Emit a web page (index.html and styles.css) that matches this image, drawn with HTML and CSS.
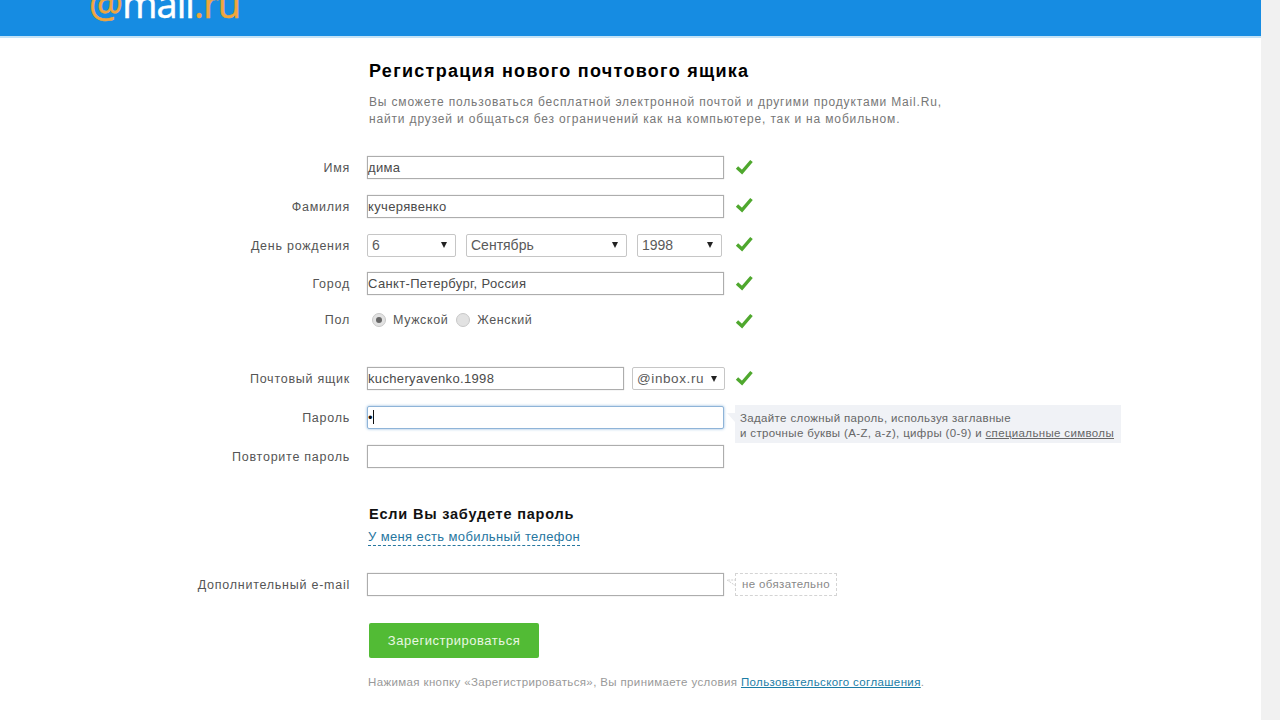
FILE: index.html
```html
<!DOCTYPE html>
<html lang="ru">
<head>
<meta charset="utf-8">
<title>Регистрация нового почтового ящика</title>
<link rel="stylesheet" href="styles.css">
</head>
<body>
<div class="page">
  <main class="main">
    <header class="topbar">
      <div class="logo"><span class="logo-o">@</span><span class="logo-w">mail</span><span class="logo-o">.ru</span></div>
    </header>
    <section class="intro">
      <h1 class="title">Регистрация нового почтового ящика</h1>
      <p class="lead">Вы сможете пользоваться бесплатной электронной почтой и другими продуктами Mail.Ru,<br>найти друзей и общаться без ограничений как на компьютере, так и на мобильном.</p>
    </section>
    <form class="form">
      <div class="row">
        <div class="label">Имя</div>
        <div class="field wide">дима</div>
        <svg class="check" viewBox="0 0 18 16"><path d="M2 8.5 L7 13 L16.5 2"/></svg>
      </div>
      <div class="row">
        <div class="label">Фамилия</div>
        <div class="field wide">кучерявенко</div>
        <svg class="check" viewBox="0 0 18 16"><path d="M2 8.5 L7 13 L16.5 2"/></svg>
      </div>
      <div class="row">
        <div class="label">День рождения</div>
        <div class="selects">
          <div class="select s-day"><span>6</span><i class="tri"></i></div>
          <div class="select s-month"><span>Сентябрь</span><i class="tri"></i></div>
          <div class="select s-year"><span>1998</span><i class="tri"></i></div>
        </div>
        <svg class="check" viewBox="0 0 18 16"><path d="M2 8.5 L7 13 L16.5 2"/></svg>
      </div>
      <div class="row">
        <div class="label">Город</div>
        <div class="field wide">Санкт-Петербург, Россия</div>
        <svg class="check" viewBox="0 0 18 16"><path d="M2 8.5 L7 13 L16.5 2"/></svg>
      </div>
      <div class="row row-gap">
        <div class="label label-up">Пол</div>
        <div class="radios">
          <i class="radio on"></i><span class="radio-text">Мужской</span>
          <i class="radio"></i><span class="radio-text">Женский</span>
        </div>
        <svg class="check check-up" viewBox="0 0 18 16"><path d="M2 8.5 L7 13 L16.5 2"/></svg>
      </div>
      <div class="row">
        <div class="label">Почтовый ящик</div>
        <div class="mailbox">
          <div class="field mail-name">kucheryavenko.1998</div>
          <div class="select s-domain"><span>@inbox.ru</span><i class="tri"></i></div>
        </div>
        <svg class="check" viewBox="0 0 18 16"><path d="M2 8.5 L7 13 L16.5 2"/></svg>
      </div>
      <div class="row">
        <div class="label">Пароль</div>
        <div class="field wide focus"><span class="dot">•</span><span class="caret"></span></div>
        <div class="tip">
          <i class="tip-arrow"></i>
          Задайте сложный пароль, используя заглавные<br>и строчные буквы (A-Z, a-z), цифры (0-9) и <a class="tip-link">специальные символы</a>
        </div>
      </div>
      <div class="row">
        <div class="label">Повторите пароль</div>
        <div class="field wide"></div>
      </div>
    </form>
    <section class="recover">
      <h2 class="subtitle">Если Вы забудете пароль</h2>
      <a class="phone-link">У меня есть мобильный телефон</a>
    </section>
    <div class="row extra">
      <div class="label">Дополнительный e-mail</div>
      <div class="field wide"></div>
      <div class="optional">
        <svg class="opt-arrow" viewBox="0 0 11 10"><path d="M11 7 L2 1 L11 1"/></svg>
        не обязательно
      </div>
    </div>
    <section class="actions">
      <button class="submit" type="button">Зарегистрироваться</button>
      <p class="terms">Нажимая кнопку «Зарегистрироваться», Вы принимаете условия <a class="terms-link">Пользовательского соглашения</a>.</p>
    </section>
  </main>
  <div class="scrollbar"></div>
</div>
</body>
</html>
```

FILE: styles.css
```css
* { box-sizing: border-box; }
html, body { margin: 0; height: 100%; overflow: hidden; }
body { background: #fff; font-family: "Liberation Sans", Arial, sans-serif; font-size: 13px; color: #555; }
.page { display: flex; height: 720px; overflow: hidden; }
.main { width: 1261px; flex: none; }
.scrollbar { flex: 1; background: #f1f1f1; }

.topbar { height: 38px; background: #168ce2; border-bottom: 2px solid #c4e3f7; overflow: hidden; padding-left: 89px; }
.logo { margin-top: -17px; font-family: "Open Sans", sans-serif; font-weight: 400; font-size: 38px; line-height: 40px; letter-spacing: -0.9px; white-space: nowrap; -webkit-text-stroke: 0.5px; }
.logo-o { color: #f0a63c; }
.logo-w { color: #fff; }

.intro { padding: 22px 0 0 369px; height: 118px; }
.title { margin: 0; font-size: 18px; line-height: 22px; font-weight: bold; color: #000; letter-spacing: 1.28px; }
.lead { margin: 12px 0 0; font-size: 12px; line-height: 17px; color: #777; letter-spacing: 0.84px; }

.form { display: flex; flex-direction: column; gap: 15.8px; }
.row { display: flex; align-items: center; height: 23px; position: relative; }
.row-gap { margin-bottom: 17.2px; }
.label { width: 350px; padding-top: 1px; text-align: right; font-size: 12.5px; color: #555; letter-spacing: 0.75px; white-space: nowrap; flex: none; margin-right: 17px; }
.label-up { position: relative; top: -3px; }
.field { height: 23px; border: 1px solid #adadad; box-shadow: 0 0 1px #c4c4c4; background: #fff; display: flex; align-items: center; padding-left: 0; font-size: 13px; color: #4a4a4a; letter-spacing: 0.35px; white-space: nowrap; }
.wide { width: 357px; }
.check { width: 18px; height: 16px; margin-left: 11px; margin-bottom: 2px; flex: none; fill: none; stroke: #4fa82e; stroke-width: 3.4; }
.check-up { margin-bottom: 3px; }

.selects { width: 357px; display: flex; gap: 10px; }
.select { height: 23px; border: 1px solid #c6c6c6; border-radius: 2px; background: #fff; display: flex; align-items: center; justify-content: space-between; padding: 0 8px 0 4px; font-size: 14px; color: #5a5a5a; letter-spacing: 0; }
.s-day { width: 89px; }
.s-month { width: 161px; }
.s-year { width: 85px; }
.tri { width: 0; height: 0; border-left: 3px solid transparent; border-right: 3px solid transparent; border-top: 6px solid #222; }

.radios { width: 357px; display: flex; align-items: center; padding-left: 5px; padding-bottom: 6px; font-size: 12.5px; color: #555; letter-spacing: 0.6px; }
.radio { width: 14px; height: 14px; border-radius: 50%; background: #e2e2e2; border: 1px solid #c8c8c8; display: flex; align-items: center; justify-content: center; flex: none; }
.radio.on::after { content: ""; width: 6px; height: 6px; border-radius: 50%; background: #666; }
.radio-text { margin: 0 8px 0 7px; }

.mailbox { width: 358px; display: flex; justify-content: space-between; }
.mail-name { width: 257px; }
.s-domain { width: 93px; padding: 0 7px 0 4px; font-size: 13.5px; letter-spacing: 0.6px; }
.mailbox + .check { margin-left: 10px; }

.focus { border-color: #8fb4d8; box-shadow: 0 0 3px #8db6dc; border-radius: 2px; }
.dot { color: #111; font-size: 13px; letter-spacing: 0; }
.caret { width: 1px; height: 14px; background: #111; margin-left: 0; }

.tip { position: absolute; left: 735px; top: -1px; width: 386px; height: 38px; background: #f0f2f6; padding: 6px 0 0 5px; font-size: 11.5px; line-height: 15px; color: #666; letter-spacing: 0.35px; white-space: nowrap; }
.tip-arrow { position: absolute; left: -8px; top: 8px; width: 0; height: 0; border-top: 9px solid #f0f2f6; border-left: 8px solid transparent; }
.tip-link { color: #666; text-decoration: underline; }

.recover { padding: 37.5px 0 0 369px; height: 105.2px; }
.subtitle { margin: 0; font-size: 14.5px; line-height: 18px; font-weight: bold; color: #111; letter-spacing: 0.8px; }
.phone-link { display: inline-block; margin-top: 6px; margin-left: -1px; font-size: 13px; line-height: 16px; color: #26769f; letter-spacing: 0.38px; border-bottom: 1px dashed #26769f; }

.optional { position: relative; margin-left: 11px; width: 102px; height: 23px; border: 1px dashed #d4d4d4; color: #888; font-size: 11.5px; letter-spacing: 0.35px; display: flex; align-items: center; justify-content: center; white-space: nowrap; }
.opt-arrow { position: absolute; left: -11px; top: 5px; width: 11px; height: 10px; fill: none; stroke: #d0d0d0; stroke-width: 1; stroke-dasharray: 2 1; }

.actions { padding: 27px 0 0 369px; }
.submit { display: block; width: 170px; height: 35px; padding: 0; border: 0; border-radius: 2px; background: #52bb35; color: #e9f7e2; font-family: inherit; font-size: 13px; letter-spacing: 0.53px; }
.terms { margin: 17px 0 0 -1px; font-size: 11.5px; line-height: 14px; color: #999; letter-spacing: 0.37px; white-space: nowrap; }
.terms-link { color: #1c7da6; text-decoration: underline; }
```
